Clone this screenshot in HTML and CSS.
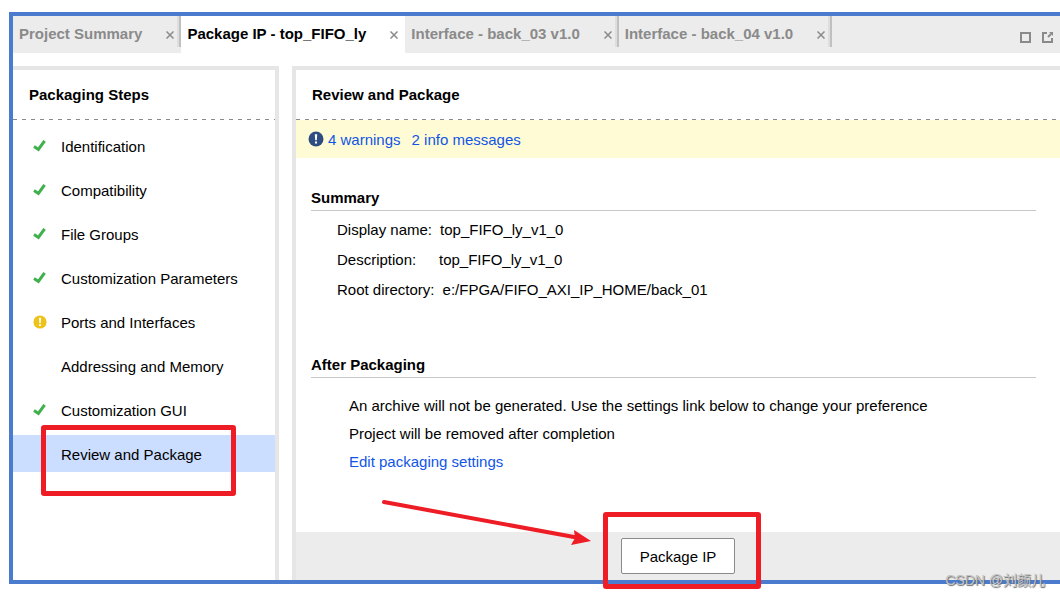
FILE: index.html
```html
<!DOCTYPE html>
<html lang="en">
<head>
  <meta charset="UTF-8">
  <title>Package IP - top_FIFO_ly</title>
  <link rel="stylesheet" href="styles.css">
</head>
<body>
  <!-- shared icons -->
  <svg class="sprite" aria-hidden="true">
    <symbol id="check" viewBox="0 0 14 14">
      <path d="M1 7.4 L5.4 10.4 L11.6 1.8" fill="none" stroke="#3fb04b" stroke-width="3"/>
    </symbol>
    <symbol id="close" viewBox="0 0 8 8">
      <path d="M0.5 0.5 L7.5 7.5 M7.5 0.5 L0.5 7.5" fill="none" stroke="#8a8a8a" stroke-width="1.5"/>
    </symbol>
    <symbol id="alert" viewBox="0 0 16 16">
      <circle cx="8" cy="8" r="7.5" fill="currentColor"/>
      <path d="M6.8 3.2 H9.2 L8.8 9.3 H7.2 Z M7 10.6 H9 V12.6 H7 Z" fill="#fff"/>
    </symbol>
  </svg>

  <div class="window">
    <div class="tab-bar">
      <div class="tab">
        <button type="button" class="tab-name">Project Summary</button>
        <button type="button" class="tab-close" aria-label="Close"><svg width="8" height="8"><use href="#close"/></svg></button>
      </div>
      <div class="tab active">
        <button type="button" class="tab-name">Package IP - top_FIFO_ly</button>
        <button type="button" class="tab-close" aria-label="Close"><svg width="8" height="8"><use href="#close"/></svg></button>
      </div>
      <div class="tab">
        <button type="button" class="tab-name">Interface - back_03 v1.0</button>
        <button type="button" class="tab-close" aria-label="Close"><svg width="8" height="8"><use href="#close"/></svg></button>
      </div>
      <div class="tab">
        <button type="button" class="tab-name">Interface - back_04 v1.0</button>
        <button type="button" class="tab-close" aria-label="Close"><svg width="8" height="8"><use href="#close"/></svg></button>
      </div>
      <div class="window-tools">
        <button type="button" aria-label="Maximize">
          <svg width="11" height="11" viewBox="0 0 11 11"><rect x="1" y="1" width="9" height="9" fill="none" stroke="#8a8a8a" stroke-width="2"/></svg>
        </button>
        <button type="button" aria-label="Float">
          <svg width="11" height="11" viewBox="0 0 11 11"><path d="M5 1 H1 V10 H10 V6" fill="none" stroke="#8a8a8a" stroke-width="2"/><path d="M7 0 H11 V4 Z" fill="#8a8a8a"/><path d="M6 5 L9 2" stroke="#8a8a8a" stroke-width="2"/></svg>
        </button>
      </div>
    </div>

    <div class="panels">
      <nav class="steps">
        <h2>Packaging Steps</h2>
        <ul>
          <li><svg class="icon"><use href="#check"/></svg><a href="#">Identification</a></li>
          <li><svg class="icon"><use href="#check"/></svg><a href="#">Compatibility</a></li>
          <li><svg class="icon"><use href="#check"/></svg><a href="#">File Groups</a></li>
          <li><svg class="icon"><use href="#check"/></svg><a href="#">Customization Parameters</a></li>
          <li><svg class="icon caution"><use href="#alert"/></svg><a href="#">Ports and Interfaces</a></li>
          <li><span class="icon"></span><a href="#">Addressing and Memory</a></li>
          <li><svg class="icon"><use href="#check"/></svg><a href="#">Customization GUI</a></li>
          <li class="selected"><span class="icon"></span><a href="#">Review and Package</a><span class="mark mark-step"></span></li>
        </ul>
      </nav>

      <main class="review">
        <h2>Review and Package</h2>
        <div class="messages">
          <svg width="16" height="16"><use href="#alert"/></svg>
          <a href="#">4 warnings</a>
          <a href="#">2 info messages</a>
        </div>

        <section>
          <h3>Summary</h3>
          <dl>
            <div><dt>Display name:</dt><dd>top_FIFO_ly_v1_0</dd></div>
            <div><dt>Description:</dt><dd>top_FIFO_ly_v1_0</dd></div>
            <div><dt>Root directory:</dt><dd>e:/FPGA/FIFO_AXI_IP_HOME/back_01</dd></div>
          </dl>
        </section>

        <section class="after">
          <h3>After Packaging</h3>
          <p>An archive will not be generated. Use the settings link below to change your preference</p>
          <p>Project will be removed after completion</p>
          <p><a href="#">Edit packaging settings</a></p>
        </section>

        <div class="actions">
          <div class="package">
            <button type="button">Package IP</button>
            <span class="mark mark-button"></span>
            <svg class="arrow" width="212" height="52" viewBox="0 0 212 52">
              <path d="M4 5 L194 40" stroke="#ee1c24" stroke-width="4" stroke-linecap="round"/>
              <path d="M194 33 L211 44 L191 48 L195 41 Z" fill="#ee1c24"/>
            </svg>
          </div>
        </div>
      </main>
    </div>
  </div>
  <span class="watermark">CSDN @刘颜儿</span>
</body>
</html>
```
FILE: styles.css
```css
* {
  box-sizing: border-box;
}

body {
  margin: 0;
  min-height: 100vh;
  padding: 12px 0 14px 9px;
  display: flex;
  flex-direction: column;
  position: relative;
  background: #fff;
  color: #000;
  font-family: "Liberation Sans", "Noto Sans CJK SC", Arial, sans-serif;
  font-size: 15px;
}

button {
  font: inherit;
  color: inherit;
  border: none;
  background: none;
  padding: 0;
  cursor: pointer;
}

a {
  color: #1155e6;
  text-decoration: none;
}

h2, h3, ul, dl, dd, p {
  margin: 0;
  padding: 0;
}

h2, h3 {
  font-size: 15px;
}

.sprite {
  display: none;
}

.window {
  flex: 1;
  display: flex;
  flex-direction: column;
  border: 4px solid #4a7bcf;
  border-right: none;
}

/* tabs */
.tab-bar {
  display: flex;
  height: 37px;
  background: #ececec;
}

.tab {
  display: flex;
  padding-left: 6px;
  color: #8a8a8a;
  font-weight: bold;
}

.tab-name {
  padding-bottom: 3px;
  white-space: nowrap;
}

.tab-close {
  display: flex;
  align-items: center;
  margin: 0 3px 0 24px;
}

.tab::after {
  content: "";
  height: 31px;
  border-left: 2px solid #dedede;
  border-right: 2px solid #c0c0c0;
}

.tab.active {
  background: #fff;
  color: #000;
}

.tab.active::after {
  border-color: transparent;
}

.window-tools {
  display: flex;
  gap: 11px;
  align-items: center;
  margin-left: auto;
  padding: 6px 7px 0 0;
}

.window-tools button, .window-tools svg {
  display: block;
}

/* panels */
.panels {
  flex: 1;
  display: flex;
  gap: 13px;
  padding-top: 13px;
}

.steps, .review {
  border-top: 4px solid #e6e6e6;
}

.steps {
  width: 266px;
  flex-shrink: 0;
  border-right: 4px solid #e6e6e6;
}

.review {
  flex: 1;
  display: flex;
  flex-direction: column;
  border-left: 4px solid #e6e6e6;
}

.panels h2 {
  height: 50px;
  padding: 0 16px;
  line-height: 50px;
  background: repeating-linear-gradient(to right, #8a8a8a 0 4px, transparent 4px 9px) left bottom / 100% 1px no-repeat;
}

.steps ul {
  list-style: none;
  display: grid;
  gap: 7px;
  padding-top: 7px;
}

.steps li {
  display: flex;
  align-items: center;
  gap: 14px;
  height: 37px;
  padding-left: 20px;
  position: relative;
}

.steps li a {
  color: #000;
  padding-top: 2px;
}

.steps .selected {
  background: #ccdeff;
}

.icon {
  width: 14px;
  height: 14px;
}

.caution {
  color: #edc31a;
}

.messages {
  display: flex;
  align-items: center;
  height: 38px;
  padding-left: 12px;
  background: #fffcd5;
  color: #2f4d80;
}

.messages a {
  margin: 0 7px 0 4px;
}

section {
  margin: 28px 24px 0 15px;
}

section h3 {
  line-height: 24px;
  border-bottom: 1px solid #c8c8c8;
}

dl {
  padding: 4px 0 0 26px;
  line-height: 30px;
}

dl div {
  display: flex;
  gap: 8px;
}

dt {
  min-width: 94px;
}

.after {
  margin-top: 48px;
}

.after p {
  padding-left: 38px;
  line-height: 28px;
}

.after h3 {
  margin-bottom: 14px;
}

.actions {
  display: flex;
  justify-content: center;
  align-items: center;
  height: 48px;
  margin-top: auto;
  background: #ececec;
}

.package {
  position: relative;
}

.package button {
  display: block;
  width: 114px;
  height: 36px;
  border: 1px solid #8a8a8a;
  border-radius: 2px;
  background: #fff;
}

/* red annotations */
.mark {
  position: absolute;
  border: 5px solid #ee1c24;
  border-radius: 3px;
}

.mark-step {
  left: 28px;
  top: -10px;
  width: 195px;
  height: 71px;
}

.mark-button {
  left: -18px;
  top: -26px;
  width: 158px;
  height: 77px;
}

.arrow {
  position: absolute;
  right: 143px;
  top: -41px;
  fill: none;
}

.watermark {
  position: absolute;
  right: 15px;
  bottom: 8px;
  font-size: 14px;
  line-height: 20px;
  color: #c4c4c4;
  text-shadow: 1px 1px 1px #666;
}
```
